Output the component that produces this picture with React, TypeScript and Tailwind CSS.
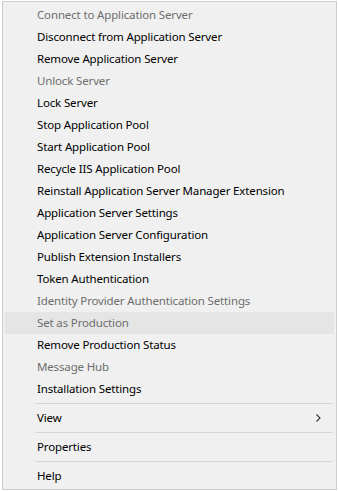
type Item = { label: string; disabled?: boolean; hover?: boolean; submenu?: boolean };

const groups: Item[][] = [
  [
    { label: "Connect to Application Server", disabled: true },
    { label: "Disconnect from Application Server" },
    { label: "Remove Application Server" },
    { label: "Unlock Server", disabled: true },
    { label: "Lock Server" },
    { label: "Stop Application Pool" },
    { label: "Start Application Pool" },
    { label: "Recycle IIS Application Pool" },
    { label: "Reinstall Application Server Manager Extension" },
    { label: "Application Server Settings" },
    { label: "Application Server Configuration" },
    { label: "Publish Extension Installers" },
    { label: "Token Authentication" },
    { label: "Identity Provider Authentication Settings", disabled: true },
    { label: "Set as Production", disabled: true, hover: true },
    { label: "Remove Production Status" },
    { label: "Message Hub", disabled: true },
    { label: "Installation Settings" },
  ],
  [{ label: "View", submenu: true }],
  [{ label: "Properties" }],
  [{ label: "Help" }],
];

const MenuRow = ({ item }: { item: Item }) => (
  <div
    className={`flex items-center h-[22px] pl-[32px] pr-3 ${item.hover ? "bg-[#e5e5e5]" : ""} ${
      item.disabled ? "text-[#6d6d6d]" : "text-black"
    }`}
  >
    <span className="flex-1 whitespace-nowrap">{item.label}</span>
    {item.submenu && (
      <svg width="5" height="8" viewBox="0 0 5 8" className="mr-[1px]">
        <path d="M0.5 0.5 L4 4 L0.5 7.5" fill="none" stroke="#333" strokeWidth="1.1" />
      </svg>
    )}
  </div>
);

export default function App() {
  return (
    <div className="w-[338px] h-[491px] bg-white overflow-hidden pt-[1px] pl-[2px] font-['Segoe_UI','Noto_Sans',sans-serif] text-[11.5px] tracking-[-0.15px]">
      <div className="w-[335px] h-[489px] bg-[#f0f0f0] border border-[#cccccc] py-[2px] pl-[2px] pr-[2px]">
        {groups.map((g, i) => (
          <div key={i}>
            {i > 0 && (
              <div className="h-[7px] flex items-center pl-[30px] pr-[1px]">
                <div className="h-px w-full bg-[#d7d7d7]" />
              </div>
            )}
            {g.map((item) => (
              <MenuRow key={item.label} item={item} />
            ))}
          </div>
        ))}
      </div>
    </div>
  );
}
